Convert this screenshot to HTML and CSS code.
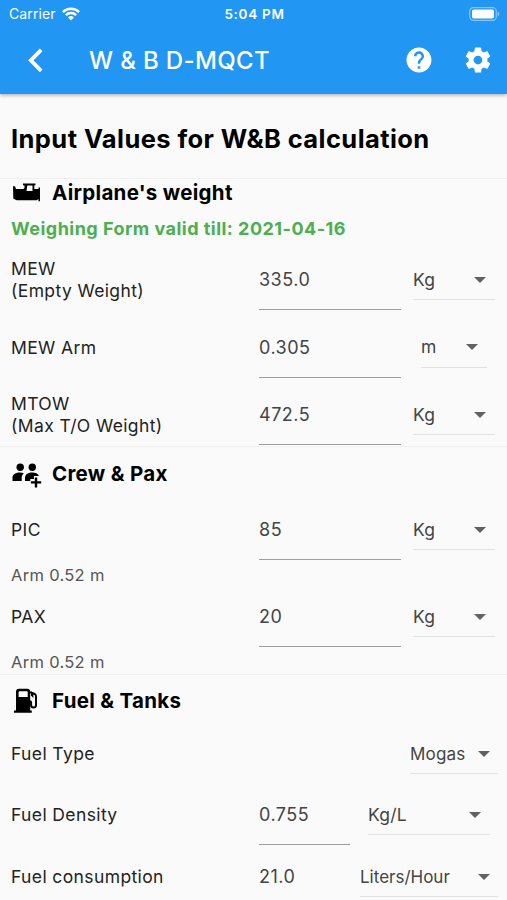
FILE: index.html
```html
<!DOCTYPE html>
<html lang="en">
<head>
<meta charset="utf-8">
<title>W &amp; B D-MQCT</title>
<link rel="stylesheet" href="styles.css">
</head>
<body>
<svg class="defs" aria-hidden="true">
  <symbol id="caret" viewBox="0 0 12 6"><path d="M0 0h12L6 6z"/></symbol>
</svg>
<header class="top">
  <div class="status">
    <div class="carrier"><span>Carrier</span>
      <svg class="wifi" viewBox="0 0 18 14"><path d="M0 4.2a13 13 0 0 1 18 0l-1.7 1.8a10.5 10.5 0 0 0-14.6 0zM3 7.3a8.600 8.600 0 0 1 12 0l-1.700 1.800a6.200 6.200 0 0 0-8.600 0zM6 10.400a4.300 4.300 0 0 1 6 0L9 13.600z"/></svg>
    </div>
    <span class="clock">5:04 PM</span>
    <svg class="battery" viewBox="0 0 31 14"><rect x=".7" y=".7" width="26.6" height="12.6" rx="3.6" fill="none" stroke="#fff" stroke-opacity=".45" stroke-width="1.2"/><rect x="3" y="2.5" width="22" height="9" rx="1.8"/><path d="M28.7 4.6c2 .8 2 4 0 4.8z" opacity=".5"/></svg>
  </div>
  <nav class="bar">
    <svg class="back" viewBox="0 0 15 25"><path d="M13.2 1.8 2.8 12.3l10.4 10.5" fill="none" stroke="#fff" stroke-width="3.8"/></svg>
    <h1>W &amp; B D-MQCT</h1>
    <svg class="action" viewBox="0 0 24 24"><path d="M12 2C6.48 2 2 6.48 2 12s4.48 10 10 10 10-4.48 10-10S17.52 2 12 2zm1 17h-2v-2h2v2zm2.07-7.75l-.9.92C13.45 12.9 13 13.5 13 15h-2v-.5c0-1.1.45-2.1 1.17-2.83l1.24-1.26c.37-.36.59-.86.59-1.41 0-1.1-.9-2-2-2s-2 .9-2 2H8c0-2.21 1.79-4 4-4s4 1.79 4 4c0 .88-.36 1.68-.93 2.25z"/></svg>
    <svg class="action" viewBox="0 0 24 24"><path d="M19.43 12.98c.04-.32.07-.64.07-.98s-.03-.66-.07-.98l2.11-1.65c.19-.15.24-.42.12-.64l-2-3.46c-.12-.22-.39-.3-.61-.22l-2.49 1c-.52-.4-1.08-.73-1.69-.98l-.38-2.65C14.46 2.18 14.25 2 14 2h-4c-.25 0-.46.18-.49.42l-.38 2.65c-.61.25-1.17.59-1.69.98l-2.49-1c-.23-.09-.49 0-.61.22l-2 3.46c-.13.22-.07.49.12.64l2.11 1.65c-.04.32-.07.65-.07.98s.03.66.07.98l-2.11 1.65c-.19.15-.24.42-.12.64l2 3.46c.12.22.39.3.61.22l2.49-1c.52.4 1.08.73 1.69.98l.38 2.65c.03.24.24.42.49.42h4c.25 0 .46-.18.49-.42l.38-2.65c.61-.25 1.17-.59 1.69-.98l2.49 1c.23.09.49 0 .61-.22l2-3.46c.12-.22.07-.49-.12-.64l-2.11-1.65zM12 15.5c-1.93 0-3.5-1.57-3.5-3.5s1.57-3.5 3.5-3.5 3.5 1.57 3.5 3.5-1.57 3.5-3.5 3.5z"/></svg>
  </nav>
</header>
<main>
  <h2>Input Values for W&amp;B calculation</h2>
  <section class="weight">
    <h3><svg viewBox="0 0 30 28"><path fill-rule="evenodd" d="M2 7.300h2l1 2.700h7.500l1-1.300V6.600L12 6.200V4.500h12.500v1.700h-1.200V10h4.200V8.500H29v13.800h-1.500V20l-1.700 1.200H5.500L2.300 19.600zM16.300 6.500l-.8 5.500h6V6.500z"/></svg><span>Airplane's weight</span></h3>
    <p class="valid">Weighing Form valid till: 2021-04-16</p>
    <div class="rows">
      <div class="row"><label>MEW<br>(Empty Weight)</label><div class="field">335.0</div><div class="select">Kg<svg><use href="#caret"/></svg></div></div>
      <div class="row"><label>MEW Arm</label><div class="field">0.305</div><div class="select narrow">m<svg><use href="#caret"/></svg></div></div>
      <div class="row"><label>MTOW<br>(Max T/O Weight)</label><div class="field">472.5</div><div class="select">Kg<svg><use href="#caret"/></svg></div></div>
    </div>
  </section>
  <section class="crew">
    <h3><svg viewBox="0 0 30 28"><circle cx="9.200" cy="7.200" r="3.700"/><circle cx="21.300" cy="7.200" r="3.700"/><path d="M1.500 21v-3.200c0-3.700 3.600-5.300 7.400-5.300 1.500 0 2.800.2 4 .7-1.600 1.400-2.200 2.800-2.200 4.600V21zM14 21v-3.200c0-3.700 3.500-5.300 7.300-5.300 3.100 0 5.900 1.200 6.600 3.400h-5v3.200h-3.600V21zM23.800 17.500h2.400v3.800h4v2.300h-4v4h-2.400v-4h-3.900v-2.300h3.900z"/></svg><span>Crew &amp; Pax</span></h3>
    <div class="row"><label>PIC</label><div class="field">85</div><div class="select">Kg<svg><use href="#caret"/></svg></div></div>
    <p class="arm">Arm 0.52 m</p>
    <div class="row"><label>PAX</label><div class="field">20</div><div class="select">Kg<svg><use href="#caret"/></svg></div></div>
    <p class="arm">Arm 0.52 m</p>
  </section>
  <section class="fuel">
    <h3><svg viewBox="0 0 30 28"><path fill-rule="evenodd" d="M5 23.500V4.800Q5 1.800 8 1.800h8.200q3 0 3 3v18.700h1.600v2.300H3v-2.300zM8.600 4.300q-1 0-1 1v4.800h9.100V5.300q0-1-1-1z"/><path d="M19 5.200l4.800 1.800q1.200.7 1.200 2.500V18q0 2.500-2.500 2.500-2.400 0-2.400-2.500v-2.500q0-1.200-1.300-1.200" fill="none" stroke="#000" stroke-width="2"/><path d="M20 4.300l2.400 1.700v5L20 8.500z"/></svg><span>Fuel &amp; Tanks</span></h3>
    <div class="row type"><label>Fuel Type</label><div class="select">Mogas<svg><use href="#caret"/></svg></div></div>
    <div class="row density"><label>Fuel Density</label><div class="field">0.755</div><div class="select">Kg/L<svg><use href="#caret"/></svg></div></div>
    <div class="row rate"><label>Fuel consumption</label><div class="field">21.0</div><div class="select">Liters/Hour<svg><use href="#caret"/></svg></div></div>
  </section>
</main>
</body>
</html>
```
FILE: styles.css
```css
* { box-sizing: border-box; margin: 0; padding: 0; }
html, body { height: 900px; overflow: hidden; }
body { width: 507px; background: #fafafa; color: #222; font: 17px/22px Inter, "Liberation Sans", sans-serif; letter-spacing: .2px; }
.defs { position: absolute; width: 0; height: 0; }

.top { position: relative; height: 94px; background: #2196f3; color: #fff; fill: #fff; box-shadow: 0 1px 4px rgba(0,0,0,.35); }
.status { height: 27px; display: grid; grid-template-columns: 1fr auto 1fr; align-items: center; padding: 0 7px 0 9px; font-size: 14px; letter-spacing: .1px; }
.carrier { display: flex; align-items: center; gap: 6px; }
.wifi { width: 18px; height: 14px; }
.clock { font-weight: 600; font-size: 13.5px; letter-spacing: .7px; }
.battery { width: 31px; height: 14px; justify-self: end; }
.bar { height: 66px; display: flex; align-items: center; padding: 0 14px 0 28px; }
.back { width: 15px; height: 25px; margin-right: 46px; }
h1 { flex: 1; padding-top: 1px; font-size: 24px; font-weight: 500; line-height: 30px; letter-spacing: .35px; }
.action { width: 30px; height: 30px; }
.action + .action { margin-left: 29px; }

h2 { height: 84px; padding: 30px 11px 0; font-size: 25.5px; line-height: 30px; font-weight: 650; letter-spacing: .42px; color: #000; white-space: nowrap; }
section { border-top: 1px solid #f0f0f0; padding-left: 11px; }
h3 { display: flex; align-items: center; gap: 11px; height: 28px; font-size: 20.5px; font-weight: 650; letter-spacing: .3px; color: #000; }
h3 svg { width: 30px; height: 28px; fill: #000; overflow: visible; }
.valid { margin-top: 11px; font-size: 18px; font-weight: 650; letter-spacing: .47px; color: #4caf50; white-space: nowrap; }
.weight { height: 268px; }
.weight .rows { margin-top: 10px; display: grid; gap: 7.5px; }
.row { display: grid; grid-template-columns: 248px 142px 82px; column-gap: 0; align-items: center; height: 60px; }
.row .select { margin-left: 12px; }
.row label { font-size: 17.5px; letter-spacing: .38px; }
.field { height: 60px; display: flex; align-items: center; padding-top: 1px; border-bottom: 1px solid #9e9e9e; color: #444; font-size: 18px; letter-spacing: .5px; }
.select { width: 82px; height: 40px; display: flex; align-items: center; justify-content: space-between; border-bottom: 1px solid #e2e2e2; padding-right: 9px; color: #444; font-size: 17.5px; }
.select svg { width: 12px; height: 6px; fill: #616161; }
.row .narrow { width: 66px; margin-left: 20px; }
.crew { height: 228px; padding-top: 13px; }
.crew .row { margin-top: 12px; }
.arm { height: 27px; padding-top: 4px; font-size: 16.5px; letter-spacing: .3px; color: #555; }
.crew .arm + .row { margin-top: 0; }
.fuel { padding-top: 12px; }
.type { height: 50px; margin-top: 14px; grid-template-columns: 387px 88px; }
.row.type .select { width: 88px; margin-left: 12px; padding-right: 8px; font-size: 17px; }
.density { margin-top: 6px; grid-template-columns: 248px 91px 122px; }
.density .select { width: 122px; margin-left: 18px; letter-spacing: .2px; }
.rate { margin-top: 2px; grid-template-columns: 248px 91px 138px; }
.rate .select { width: 138px; margin-left: 10px; padding-right: 8px; font-size: 17px; letter-spacing: 0; }
```
